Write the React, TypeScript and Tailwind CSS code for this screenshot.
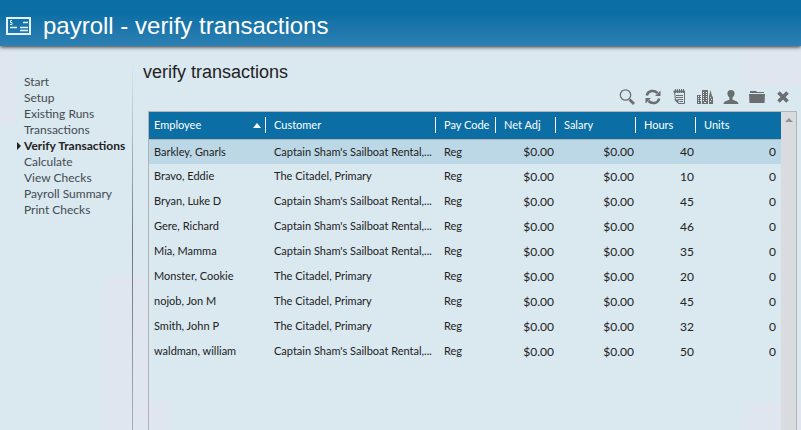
import type { ReactNode } from 'react'

const NAV = [
  'Start',
  'Setup',
  'Existing Runs',
  'Transactions',
  'Verify Transactions',
  'Calculate',
  'View Checks',
  'Payroll Summary',
  'Print Checks',
]

const ACTIVE = 'Verify Transactions'

const SHAM = "Captain Sham's Sailboat Rental,..."
const CITADEL = 'The Citadel, Primary'

const ROWS = [
  { employee: 'Barkley, Gnarls', customer: SHAM, hours: 40 },
  { employee: 'Bravo, Eddie', customer: CITADEL, hours: 10 },
  { employee: 'Bryan, Luke D', customer: SHAM, hours: 45 },
  { employee: 'Gere, Richard', customer: SHAM, hours: 46 },
  { employee: 'Mia, Mamma', customer: SHAM, hours: 35 },
  { employee: 'Monster, Cookie', customer: CITADEL, hours: 20 },
  { employee: 'nojob, Jon M', customer: CITADEL, hours: 45 },
  { employee: 'Smith, John P', customer: CITADEL, hours: 32 },
  { employee: 'waldman, william', customer: SHAM, hours: 50 },
]

const COLUMNS = [
  { title: 'Employee', width: 'w-[120px]', sorted: true },
  { title: 'Customer', width: 'w-[170px]' },
  { title: 'Pay Code', width: 'w-[60px]' },
  { title: 'Net Adj', width: 'w-[60px]' },
  { title: 'Salary', width: 'w-[80px]' },
  { title: 'Hours', width: 'w-[60px]' },
  { title: 'Units', width: '' },
]

const TOOLS: { label: string; icon: ReactNode }[] = [
  {
    label: 'Search',
    icon: (
      <>
        <circle cx="6.5" cy="6" r="5.2" fill="none" stroke="currentColor" strokeWidth="1.3" />
        <path d="M10.5 10.5L15 15" stroke="currentColor" strokeWidth="2.8" />
      </>
    ),
  },
  {
    label: 'Refresh',
    icon: (
      <>
        <path d="M1.8 6.5C3 1.500 9 .5 12.500 4M14.200 9.500C13 14.500 7 15.500 3.500 12" fill="none" stroke="currentColor" strokeWidth="2.5" />
        <path d="M15.5 1.500v5.500H10zM.5 14.500V9H6z" fill="currentColor" />
      </>
    ),
  },
  {
    label: 'Notes',
    icon: (
      <>
        <path d="M3.5 2.5h10v12h-6l-3-3.500z" fill="none" stroke="currentColor" />
        <path d="M3 10.500h4.500v4.500z" fill="currentColor" />
        <path d="M2.500 2.500h11.500" stroke="currentColor" strokeWidth="2" />
        <path d="M4.5 0v4M6.5 0v4M8.5 0v4M10.5 0v4M12.5 0v4M5 6.5h7M5 8.5h7M7 10.5h5M8.500 12.500h3.500" stroke="currentColor" />
      </>
    ),
  },
  {
    label: 'Companies',
    icon: (
      <>
        <path d="M0 6h4v9H0zM5 1h6v14H5zM12 7l1.5-6L15 7l1 1v7h-4z" fill="currentColor" />
        <path
          d="M1 7.5h1M3 7.5h1M1 9.5h1M3 9.5h1M1 11.5h1M3 11.5h1M1 13.5h1M6 3.5h1M9 3.5h1M6 5.5h1M9 5.5h1M6 7.5h1M9 7.5h1M6 9.5h1M9 9.5h1M6 11.5h1M9 11.5h1M7 13.5h2M13 8.5h1M14 10.5h1M13 12.5h1"
          stroke="#dae8f0"
        />
      </>
    ),
  },
  {
    label: 'Employee',
    icon: (
      <path
        d="M8 1C5.6 1 4.200 2.600 4.400 4.800c.2 1.800 1 2.900 2 3.800v1.800C5 11.700.5 11.700.5 15h15c0-3.300-4.500-3.300-6-4.600V8.600c1-.9 1.900-2 2.100-3.800C11.800 2.600 10.400 1 8 1z"
        fill="currentColor"
      />
    ),
  },
  {
    label: 'Folder',
    icon: (
      <>
        <path d="M1 4V2h6l1 1h7v1z" fill="currentColor" />
        <path d="M0 5h16l-.5 9H.5z" fill="currentColor" />
      </>
    ),
  },
  {
    label: 'Close',
    icon: <path d="M3.500 3.500l9 9M12.500 3.500l-9 9" stroke="currentColor" strokeWidth="3.600" />,
  },
]

function CheckIcon() {
  return (
    <svg className="h-[18px] w-[25px] text-[#e4f2fa]" viewBox="0 0 25 18" fill="none" stroke="currentColor" aria-hidden="true">
      <path d="M1 1h23v16H1z" strokeWidth="2" />
      <path d="M6 3.500H4.500v2h1.500v2H4" strokeWidth="1" />
      <path d="M17 5.500h5M4 10.500h7M14 10.500h8M14 13.500h8" strokeWidth="1.500" />
    </svg>
  )
}

export default function App() {
  return (
    <div className="flex h-screen flex-col overflow-hidden bg-[#dae8f0] bg-[linear-gradient(#dfe6f0,#dfe6f0),linear-gradient(#dfe6f0,#dfe6f0),linear-gradient(#dfe6f0,#dfe6f0),linear-gradient(#dfe6f0,#dfe6f0),linear-gradient(#dfe6f0,#dfe6f0)] bg-[size:17px_125px,43px_155px,20px_28px,56px_28px,56px_87px] bg-[position:0_0,105px_100%,148px_100%,100%_100%,100%_0] bg-no-repeat font-[Lato,sans-serif]">
      <header className="flex h-[46px] shrink-0 items-center gap-3 bg-linear-to-b from-[#0b6fa5] from-30% to-[#2c80b3] px-[6px] pt-[6px] shadow-[0_1px_4px_rgba(0,0,0,0.8)]">
        <CheckIcon />
        <h1 className="font-['Liberation_Sans',sans-serif] text-2xl text-white">payroll - verify transactions</h1>
      </header>

      <div className="flex min-h-0 flex-1">
        <nav className="w-[132px] shrink-0 pt-7 pl-4" aria-label="Payroll">
          <ul className="text-[12px] leading-4 text-[#444b50]">
            {NAV.map((item) => (
              <li key={item} className="flex items-center whitespace-nowrap">
                <span className="w-2 shrink-0">
                  {item === ACTIVE && (
                    <svg className="h-2 w-[5px] text-[#222]" viewBox="0 0 5 8" aria-hidden="true">
                      <path d="M1 0l4 4-4 4z" fill="currentColor" />
                    </svg>
                  )}
                </span>
                <a href="#" className={item === ACTIVE ? 'font-bold text-[#222]' : ''}>
                  {item}
                </a>
              </li>
            ))}
          </ul>
        </nav>

        <div className="mt-4 w-px shrink-0 bg-linear-to-b from-transparent via-[#6f777d] via-50% to-[#a9b0b6]" />

        <main className="flex min-w-0 flex-1 flex-col pr-1 pl-[15px]">
          <h2 className="-ml-[5px] pt-3 font-['Liberation_Sans',sans-serif] text-[18px] leading-7 text-[#222]">
            verify transactions
          </h2>
          <div className="flex justify-end gap-[10px] pt-[3px] pr-[6px] pb-[6px]">
            {TOOLS.map((tool) => (
              <button key={tool.label} type="button" aria-label={tool.label} className="text-[#6a6e70]">
                <svg className="h-4 w-4" viewBox="0 0 16 16" aria-hidden="true">
                  {tool.icon}
                </svg>
              </button>
            ))}
          </div>

          <div className="flex min-h-0 flex-1 border border-b-0 border-[#b3b3b3]">
            <div className="min-w-0 flex-1">
              <table className="w-full table-fixed border-collapse text-[11px] text-[#222]">
                <thead>
                  <tr className="h-[27px] border-b border-[#b3b3b3] bg-[#0b6fa5] text-left text-white">
                    {COLUMNS.map((col, i) => (
                      <th key={col.title} className={`p-0 font-normal whitespace-nowrap ${col.width}`}>
                        <div
                          className={`flex h-4 items-center justify-between pl-[5px] ${
                            i < COLUMNS.length - 1 ? 'mr-[3px] border-r border-white pr-1' : ''
                          }`}
                        >
                          {col.title}
                          {col.sorted && (
                            <svg className="h-[5px] w-2" viewBox="0 0 8 5" aria-hidden="true">
                              <path d="M0 5l4-5 4 5z" fill="currentColor" />
                            </svg>
                          )}
                        </div>
                      </th>
                    ))}
                  </tr>
                </thead>
                <tbody>
                  {ROWS.map((row, i) => (
                    <tr key={row.employee} className={`h-[25px] whitespace-nowrap ${i === 0 ? 'bg-[#bcd8e6]' : ''}`}>
                      <td className="pl-[5px]">{row.employee}</td>
                      <td className="pl-[5px]">{row.customer}</td>
                      <td className="pl-[5px]">Reg</td>
                      <td className="pr-[5px] text-right text-[12px]">$0.00</td>
                      <td className="pr-[5px] text-right text-[12px]">$0.00</td>
                      <td className="pr-[5px] text-right text-[12px]">{row.hours}</td>
                      <td className="pr-[5px] text-right text-[12px]">0</td>
                    </tr>
                  ))}
                </tbody>
              </table>
            </div>
            <div className="flex w-[15px] shrink-0 justify-center bg-[#d8dcdf] pt-[6px]">
              <svg className="h-1 w-2 text-[#8f9396]" viewBox="0 0 8 4" aria-hidden="true">
                <path d="M0 4l4-4 4 4z" fill="currentColor" />
              </svg>
            </div>
          </div>
        </main>
      </div>
    </div>
  )
}
